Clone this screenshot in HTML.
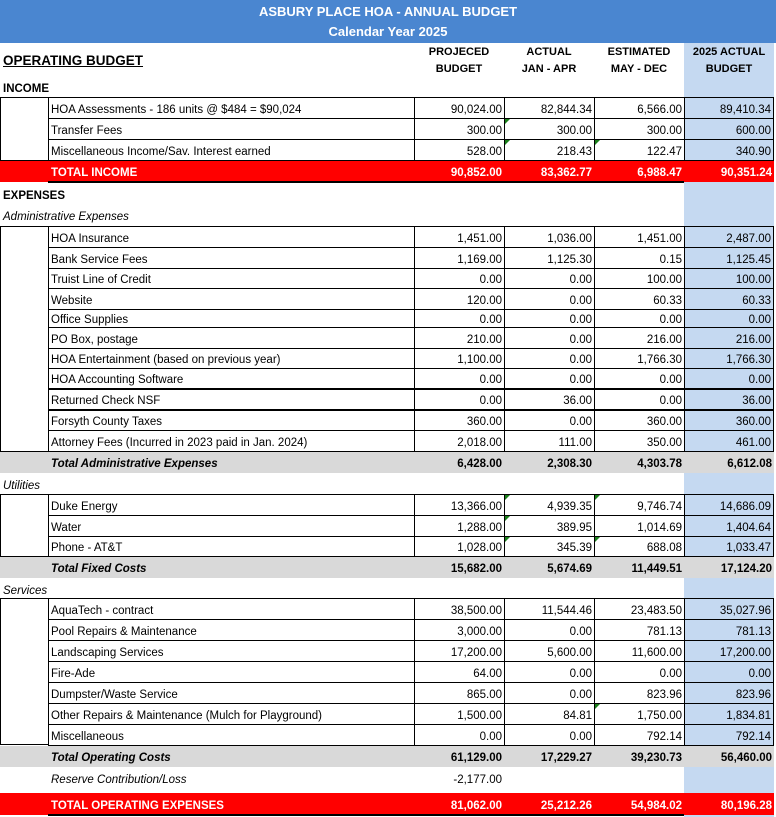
<!DOCTYPE html>
<html><head><meta charset="utf-8"><style>
*{box-sizing:border-box;margin:0;padding:0}
body{width:776px;height:817px;position:relative;background:#fff;font-family:"Liberation Sans",Arial,sans-serif;font-size:11.5px;color:#000;overflow:hidden}
.abs{position:absolute}
.title{left:0;top:0;width:776px;height:43px;background:#4a86d0;color:#fff;font-weight:bold;text-align:center;font-size:13px;line-height:20px;padding-top:2px}
.blue{left:684px;top:43px;width:90px;height:774px;background:#c5d9f1}
.h{font-weight:bold;text-align:center;line-height:17px;width:90px;font-size:11px}
.row{position:absolute;left:48px;width:726px;display:grid;grid-template-columns:366px 90px 90px 90px 90px}
.row>span{border-left:1px solid #000;border-top:1px solid #000;text-align:right;padding-right:2px;padding-top:3px;white-space:nowrap;overflow:hidden;display:flex;align-items:center;justify-content:flex-end;position:relative}
.row>span:first-child{justify-content:flex-start;padding-left:2px;text-align:left}
.row>span:last-child{border-right:1px solid #000}
.last>span{border-bottom:1px solid #000}
.lbox{position:absolute;left:0;width:49px;border:1px solid #000;border-right:none}
.tot{position:absolute;left:0;width:774px;display:grid;grid-template-columns:48px 366px 90px 90px 90px 90px;font-weight:bold}
.tot>span{display:flex;align-items:center;justify-content:flex-end;padding-right:2px;padding-top:3px;white-space:nowrap}
.tot>span:nth-child(2){justify-content:flex-start;padding-left:3px}
.red{background:#ff0000;color:#fff}
.gray{background:#d9d9d9;font-style:normal}
.gray>span:nth-child(2){font-style:italic}
.lab{position:absolute;left:3px;white-space:nowrap}
.tri{position:absolute;left:0;top:0;width:0;height:0;border-top:5px solid #1a7f1a;border-right:5px solid transparent}
</style></head><body>
<div class="abs blue"></div>
<div class="abs title">ASBURY PLACE HOA - ANNUAL BUDGET<br>Calendar Year 2025</div>
<div class="abs" style="left:3px;top:53px;font-weight:bold;font-size:13.5px;text-decoration:underline">OPERATING BUDGET</div>
<div class="abs h" style="left:414px;top:44px">PROJECED<br>BUDGET</div>
<div class="abs h" style="left:504px;top:44px">ACTUAL<br>JAN - APR</div>
<div class="abs h" style="left:594px;top:44px">ESTIMATED<br>MAY - DEC</div>
<div class="abs h" style="left:684px;top:44px">2025 ACTUAL<br>BUDGET</div>
<div class="lab" style="top:83px;font-weight:bold">INCOME</div>

<div class="lbox" style="top:97px;height:64px"></div>
<div class="row" style="top:97px;height:21px"><span>HOA Assessments - 186 units @ $484 = $90,024</span><span>90,024.00</span><span>82,844.34</span><span>6,566.00</span><span>89,410.34</span></div>
<div class="row" style="top:118px;height:21px"><span>Transfer Fees</span><span>300.00</span><span><i class="tri"></i>300.00</span><span>300.00</span><span>600.00</span></div>
<div class="row last" style="top:139px;height:22px"><span>Miscellaneous Income/Sav. Interest earned</span><span>528.00</span><span><i class="tri"></i>218.43</span><span><i class="tri"></i>122.47</span><span>340.90</span></div>
<div class="tot red" style="top:161px;height:21px"><span></span><span>TOTAL INCOME</span><span>90,852.00</span><span>83,362.77</span><span>6,988.47</span><span>90,351.24</span></div>
<div class="abs" style="left:48px;top:181px;width:636px;height:2px;background:#000"></div>

<div class="lab" style="top:190px;font-weight:bold">EXPENSES</div>
<div class="lab" style="top:211px;font-style:italic">Administrative Expenses</div>
<div class="lbox" style="top:226px;height:226px"></div>
<div class="row" style="top:226px;height:21px"><span>HOA Insurance</span><span>1,451.00</span><span>1,036.00</span><span>1,451.00</span><span>2,487.00</span></div>
<div class="row" style="top:247px;height:21px"><span>Bank Service Fees</span><span>1,169.00</span><span>1,125.30</span><span>0.15</span><span>1,125.45</span></div>
<div class="row" style="top:268px;height:20px"><span>Truist Line of Credit</span><span>0.00</span><span>0.00</span><span>100.00</span><span>100.00</span></div>
<div class="row" style="top:288px;height:21px"><span>Website</span><span>120.00</span><span>0.00</span><span>60.33</span><span>60.33</span></div>
<div class="row" style="top:309px;height:18px"><span>Office Supplies</span><span>0.00</span><span>0.00</span><span>0.00</span><span>0.00</span></div>
<div class="row" style="top:327px;height:21px"><span>PO Box, postage</span><span>210.00</span><span>0.00</span><span>216.00</span><span>216.00</span></div>
<div class="row" style="top:348px;height:20px"><span>HOA Entertainment (based on previous year)</span><span>1,100.00</span><span>0.00</span><span>1,766.30</span><span>1,766.30</span></div>
<div class="row" style="top:368px;height:20px"><span>HOA Accounting Software</span><span>0.00</span><span>0.00</span><span>0.00</span><span>0.00</span></div>
<div class="row" style="top:388px;height:21px"><span style="border-top-width:2px">Returned Check NSF</span><span style="border-top-width:2px">0.00</span><span style="border-top-width:2px">36.00</span><span style="border-top-width:2px">0.00</span><span style="border-top-width:2px">36.00</span></div>
<div class="row" style="top:409px;height:21px"><span style="border-top-width:2px">Forsyth County Taxes</span><span style="border-top-width:2px">360.00</span><span style="border-top-width:2px">0.00</span><span style="border-top-width:2px">360.00</span><span style="border-top-width:2px">360.00</span></div>
<div class="row last" style="top:430px;height:22px"><span>Attorney Fees (Incurred in 2023 paid in Jan. 2024)</span><span>2,018.00</span><span>111.00</span><span>350.00</span><span>461.00</span></div>
<div class="tot gray" style="top:452px;height:21px"><span></span><span>Total Administrative Expenses</span><span>6,428.00</span><span>2,308.30</span><span>4,303.78</span><span>6,612.08</span></div>

<div class="lab" style="top:480px;font-style:italic">Utilities</div>
<div class="lbox" style="top:494px;height:63px"></div>
<div class="row" style="top:494px;height:21px"><span>Duke Energy</span><span>13,366.00</span><span><i class="tri"></i>4,939.35</span><span><i class="tri"></i>9,746.74</span><span>14,686.09</span></div>
<div class="row" style="top:515px;height:21px"><span>Water</span><span>1,288.00</span><span><i class="tri"></i>389.95</span><span>1,014.69</span><span>1,404.64</span></div>
<div class="row last" style="top:536px;height:21px"><span>Phone - AT&amp;T</span><span>1,028.00</span><span><i class="tri"></i>345.39</span><span><i class="tri"></i>688.08</span><span>1,033.47</span></div>
<div class="tot gray" style="top:557px;height:21px"><span></span><span>Total Fixed Costs</span><span>15,682.00</span><span>5,674.69</span><span>11,449.51</span><span>17,124.20</span></div>

<div class="lab" style="top:585px;font-style:italic">Services</div>
<div class="lbox" style="top:598px;height:147px"></div>
<div class="row" style="top:598px;height:21px"><span>AquaTech - contract</span><span>38,500.00</span><span>11,544.46</span><span>23,483.50</span><span>35,027.96</span></div>
<div class="row" style="top:619px;height:21px"><span>Pool Repairs &amp; Maintenance</span><span>3,000.00</span><span>0.00</span><span>781.13</span><span>781.13</span></div>
<div class="row" style="top:640px;height:21px"><span>Landscaping Services</span><span>17,200.00</span><span>5,600.00</span><span>11,600.00</span><span>17,200.00</span></div>
<div class="row" style="top:661px;height:21px"><span>Fire-Ade</span><span>64.00</span><span>0.00</span><span>0.00</span><span>0.00</span></div>
<div class="row" style="top:682px;height:21px"><span>Dumpster/Waste Service</span><span>865.00</span><span>0.00</span><span>823.96</span><span>823.96</span></div>
<div class="row" style="top:703px;height:21px"><span>Other Repairs &amp; Maintenance (Mulch for Playground)</span><span>1,500.00</span><span>84.81</span><span><i class="tri"></i>1,750.00</span><span>1,834.81</span></div>
<div class="row last" style="top:724px;height:22px"><span>Miscellaneous</span><span>0.00</span><span>0.00</span><span>792.14</span><span>792.14</span></div>
<div class="tot gray" style="top:746px;height:21px"><span></span><span>Total Operating Costs</span><span>61,129.00</span><span>17,229.27</span><span>39,230.73</span><span>56,460.00</span></div>
<div class="tot" style="top:767px;height:22px;font-weight:normal"><span></span><span style="font-style:italic">Reserve Contribution/Loss</span><span>-2,177.00</span><span></span><span></span><span></span></div>
<div class="tot red" style="top:793px;height:22px"><span></span><span>TOTAL OPERATING EXPENSES</span><span>81,062.00</span><span>25,212.26</span><span>54,984.02</span><span>80,196.28</span></div>
<div class="abs" style="left:48px;top:814px;width:636px;height:2px;background:#000"></div>
</body></html>
